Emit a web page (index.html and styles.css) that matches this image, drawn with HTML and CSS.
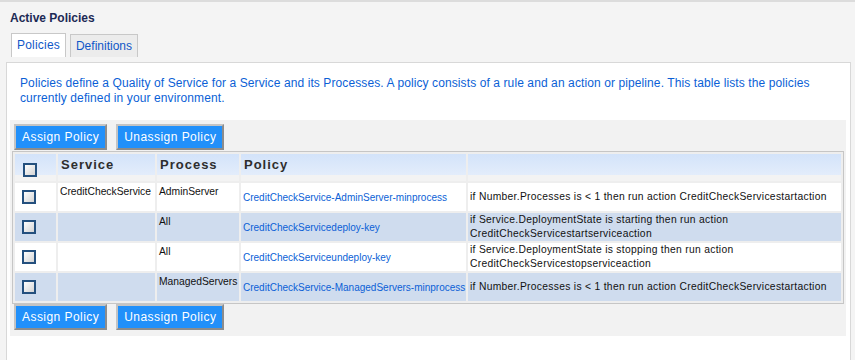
FILE: index.html
```html
<!DOCTYPE html>
<html lang="en">
<head>
  <meta charset="UTF-8">
  <title>Active Policies</title>
  <link rel="stylesheet" href="styles.css">
</head>
<body>
  <h1 class="page-title">Active Policies</h1>

  <div class="tabs">
    <div class="tab tab-active">Policies</div>
    <div class="tab">Definitions</div>
  </div>

  <div class="panel">
    <p class="intro">
      Policies define a Quality of Service for a Service and its Processes. A policy consists of a rule and an action or pipeline. This table lists the policies currently defined in your environment.
    </p>

    <div class="table-area">
      <div class="toolbar">
        <button class="btn">Assign Policy</button>
        <button class="btn">Unassign Policy</button>
      </div>

      <table class="policy-table">
        <colgroup>
          <col class="col-check">
          <col class="col-service">
          <col class="col-process">
          <col class="col-policy">
          <col>
        </colgroup>
        <thead>
          <tr>
            <th class="cell-check"><span class="checkbox"></span></th>
            <th>Service</th>
            <th>Process</th>
            <th>Policy</th>
            <th></th>
          </tr>
        </thead>
        <tbody>
          <tr>
            <td class="cell-check"><span class="checkbox"></span></td>
            <td class="cell-top">CreditCheckService</td>
            <td class="cell-top">AdminServer</td>
            <td><a href="#">CreditCheckService-AdminServer-minprocess</a></td>
            <td class="rule">if Number.Processes is &lt; 1 then run action CreditCheckServicestartaction</td>
          </tr>
          <tr class="alt">
            <td class="cell-check"><span class="checkbox"></span></td>
            <td class="cell-top"></td>
            <td class="cell-top">All</td>
            <td><a href="#">CreditCheckServicedeploy-key</a></td>
            <td class="rule">if Service.DeploymentState is starting then run action<br>CreditCheckServicestartserviceaction</td>
          </tr>
          <tr>
            <td class="cell-check"><span class="checkbox"></span></td>
            <td class="cell-top"></td>
            <td class="cell-top">All</td>
            <td><a href="#">CreditCheckServiceundeploy-key</a></td>
            <td class="rule">if Service.DeploymentState is stopping then run action<br>CreditCheckServicestopserviceaction</td>
          </tr>
          <tr class="alt">
            <td class="cell-check"><span class="checkbox"></span></td>
            <td class="cell-top"></td>
            <td class="cell-top">ManagedServers</td>
            <td><a href="#">CreditCheckService-ManagedServers-minprocess</a></td>
            <td class="rule">if Number.Processes is &lt; 1 then run action CreditCheckServicestartaction</td>
          </tr>
        </tbody>
      </table>

      <div class="toolbar">
        <button class="btn">Assign Policy</button>
        <button class="btn">Unassign Policy</button>
      </div>
    </div>
  </div>
</body>
</html>
```

FILE: styles.css
```css
* {
  box-sizing: border-box;
  margin: 0;
  padding: 0;
}

html, body {
  height: 100%;
}

body {
  font-family: 'Liberation Sans', Arial, sans-serif;
  font-size: 12px;
  background: #f4f4f4;
  border-top: 2px solid #dcdcdc;
  display: flex;
  flex-direction: column;
  overflow: hidden;
}

.page-title {
  font-size: 12px;
  font-weight: bold;
  color: #1c2a55;
  padding: 9px 0 0 10px;
  height: 31px;
}

.tabs {
  display: flex;
  gap: 4px;
  padding-left: 11px;
  height: 29px;
}

.tab {
  height: 23px;
  padding: 4px 5px 0;
  margin-top: 1px;
  border: 1px solid #c8c8c8;
  border-bottom: none;
  background: #ececec;
  color: #0f57c8;
  font-size: 12px;
}

.tab-active {
  background: #ffffff;
  margin-top: 0;
  height: 24px;
  letter-spacing: 0.2px;
}

.panel {
  flex: 1;
  margin: 0 4px 0 6px;
  background: #ffffff;
  border: 1px solid #d8d8d8;
  border-bottom: none;
  padding: 0 4px 0 3px;
}

.intro {
  color: #0b5fd6;
  font-size: 12px;
  line-height: 15px;
  letter-spacing: 0.1px;
  padding: 13px 16px 0 10px;
  height: 57px;
}

.table-area {
  background: #f2f2f2;
  padding: 4px 3px 5px 2px;
}

.toolbar {
  display: flex;
  gap: 9px;
  padding-left: 2px;
  height: 27px;
}

.btn {
  height: 26px;
  padding: 0 6px;
  background: #2190fa;
  color: #ffffff;
  font-family: 'Liberation Sans', Arial, sans-serif;
  font-size: 12px;
  letter-spacing: 0.45px;
  border: 2px solid;
  border-color: #c4c4c4 #8c8c8c #8c8c8c #c4c4c4;
  cursor: pointer;
}

.policy-table {
  width: 832px;
  table-layout: fixed;
  border: 1px solid #c6c6c6;
  border-spacing: 2px;
  background: #eeeeee;
  font-size: 10.3px;
}

.col-check {
  width: 41px;
}

.col-service {
  width: 97px;
}

.col-process {
  width: 82px;
}

.col-policy {
  width: 225px;
}

.policy-table th {
  height: 27px;
  text-align: left;
  font-size: 13px;
  font-weight: bold;
  color: #2e2e2e;
  letter-spacing: 1px;
  padding: 0 3px 6px;
  background: linear-gradient(#d3e3fa 0%, #e3edfb 78%, #f3f3f3 79%, #f3f3f3 100%);
}

.policy-table td {
  height: 28px;
  background: #ffffff;
  color: #111111;
  padding: 1px 2px 0;
  vertical-align: middle;
  white-space: nowrap;
  overflow: hidden;
}

.policy-table tr.alt td {
  background: #cfdcee;
}

.policy-table td.cell-top {
  vertical-align: top;
  padding-top: 3px;
}

.policy-table .cell-check {
  text-align: left;
  padding: 0 0 0 7px;
}

.policy-table th.cell-check {
  padding: 4px 0 0 8px;
}

.policy-table a {
  color: #0b5fd6;
  text-decoration: none;
  font-size: 10px;
}

.rule {
  line-height: 14px;
  letter-spacing: 0.3px;
}

.policy-table td.rule {
  padding: 0 2px;
}

.checkbox {
  display: inline-block;
  width: 14px;
  height: 14px;
  border: 2px solid #24507e;
  background: linear-gradient(135deg, #ffffff, #d4d4d4);
  vertical-align: middle;
}
```
